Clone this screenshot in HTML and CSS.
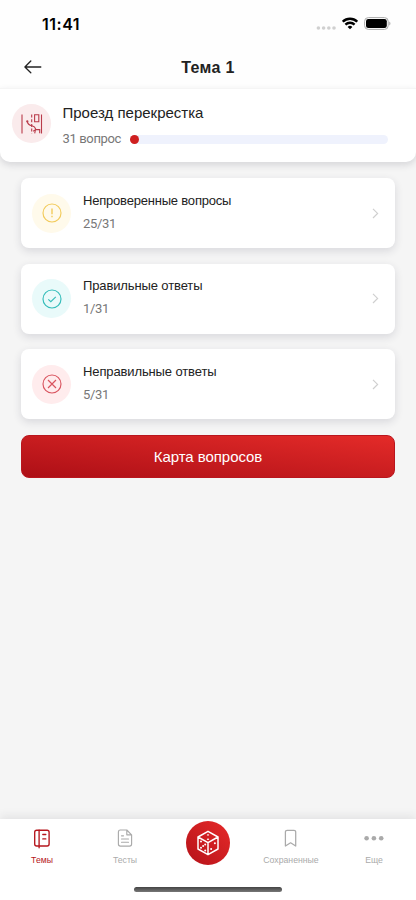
FILE: index.html
```html
<!DOCTYPE html>
<html lang="ru">
<head>
<meta charset="utf-8">
<meta name="viewport" content="width=device-width, initial-scale=1">
<title>Тема 1</title>
<link rel="stylesheet" href="styles.css">
</head>
<body>
<div class="app">
  <div class="status">
    <span class="time">11:41</span>
    <div class="status-icons">
      <svg width="20" height="4" viewBox="0 0 20 4" fill="#d0d0d0"><circle cx="2.4" cy="2" r="1.8"/><circle cx="7.6" cy="2" r="1.8"/><circle cx="12.8" cy="2" r="1.8"/><circle cx="18" cy="2" r="1.8"/></svg>
      <svg class="wifi" width="16" height="13" viewBox="0 0 16 13" fill="none" stroke="#000" stroke-width="2.3"><path d="M.8 4.7a10.3 10.3 0 0 1 14.4 0M3.4 7.6a6.6 6.6 0 0 1 9.2 0"/><path d="M8 12.2 5.6 9.9a3.5 3.5 0 0 1 4.8 0Z" fill="#000" stroke="none"/></svg>
      <svg width="27" height="13" viewBox="0 0 27 13"><rect x=".6" y=".6" width="23.6" height="11.8" rx="3.7" fill="#fff" stroke="#aaa"/><rect x="2" y="2" width="20.8" height="9" rx="2.3"/><path d="M25.4 4.5c1.3.6 1.3 3.4 0 4Z" fill="#999"/></svg>
    </div>
  </div>
  <header class="nav">
    <svg class="back" width="18" height="14" viewBox="0 0 18 14" fill="none" stroke="#222" stroke-width="1.3" stroke-linecap="round" stroke-linejoin="round"><path d="M16.8 7H.9M6.8 1 .9 7l5.9 5.7"/></svg>
    <h1>Тема 1</h1>
  </header>
  <section class="topic">
    <div class="badge topic-badge">
      <svg width="22" height="22" viewBox="0 0 22 22" fill="none" stroke="#b93b4a" stroke-width="1.1"><path d="M1 1.5v19M20.5 1.5v19"/><path d="M10.7 1.5v19" stroke-dasharray="3 1.7"/><path d="M13.6 1.8h4.2v7h-4.2ZM6.4 8.6c.3 3 2.3 3.7 4.6 4.2 2.8.6 3.1 1.3 3.7 3.2M13.7 20.3l.8-3.7h4.2v3.7M12.2 18.2l2.3-1.6"/><circle cx="6.3" cy="8.4" r=".6"/></svg>
    </div>
    <div class="topic-body">
      <h2>Проезд перекрестка</h2>
      <div class="progress-row"><span class="count">31 вопрос</span><div class="track"><div class="fill"></div></div></div>
    </div>
  </section>
  <main class="content">
    <article class="card">
      <div class="badge yellow"><svg width="20" height="20" viewBox="0 0 20 20" fill="none" stroke="#f2cb5c" stroke-width="1.15"><circle cx="10" cy="10" r="9"/><path d="M10 5.6v5.6M10 12.7v1.6" stroke-width="1.4"/></svg></div>
      <div class="card-text"><h3>Непроверенные вопросы</h3><p>25/31</p></div>
      <svg class="chevron" width="7" height="11" viewBox="0 0 7 11"><path d="M1 .8 5.6 5.4 1 10"/></svg>
    </article>
    <article class="card">
      <div class="badge teal"><svg width="20" height="20" viewBox="0 0 20 20" fill="none" stroke="#35bdba" stroke-width="1.15"><circle cx="10" cy="10" r="9"/><path d="m6.3 10.4 2.5 2.3 5-4.9"/></svg></div>
      <div class="card-text"><h3 class="snug">Правильные ответы</h3><p>1/31</p></div>
      <svg class="chevron" width="7" height="11" viewBox="0 0 7 11"><path d="M1 .8 5.6 5.4 1 10"/></svg>
    </article>
    <article class="card">
      <div class="badge pink"><svg width="20" height="20" viewBox="0 0 20 20" fill="none" stroke="#d95560" stroke-width="1.15"><circle cx="10" cy="10" r="9"/><path d="m6 6 8 8M14 6l-8 8"/></svg></div>
      <div class="card-text"><h3 class="snug">Неправильные ответы</h3><p>5/31</p></div>
      <svg class="chevron" width="7" height="11" viewBox="0 0 7 11"><path d="M1 .8 5.6 5.4 1 10"/></svg>
    </article>
    <button class="map" type="button">Карта вопросов</button>
  </main>
  <footer class="tabs">
    <nav class="tab-row">
      <a class="tab active"><svg width="20" height="22" viewBox="0 0 20 22" fill="none" stroke="currentColor" stroke-width="1.35" stroke-linecap="round"><rect x="2.7" y="2.2" width="14.4" height="15.8" rx="2"/><path d="M7.1 2.2v17.5M10.8 6.5h3M10.8 10.9h3"/></svg><span>Темы</span></a>
      <a class="tab"><svg width="20" height="22" viewBox="0 0 20 22" fill="none" stroke="currentColor" stroke-width="1.15" stroke-linecap="round" stroke-linejoin="round"><path d="M5 2h6.8l4.8 4.8v9.3a2 2 0 0 1-2 2H5.4a2 2 0 0 1-2-2V3.9a2 2 0 0 1 2-1.9M11.8 2v4.8h4.8M6.5 7.8h2M6.5 11h7M6.5 14.2h7"/></svg><span>Тесты</span></a>
      <a class="dice"><svg width="24" height="26" viewBox="0 0 24 26" fill="none" stroke="#fff" stroke-width="1.5" stroke-linejoin="round"><path d="M12 1.3 22 7v12l-10 5.7L2 19V7ZM2 7l10 5.7L22 7M12 12.7v12"/><g fill="#fff" stroke="none"><ellipse cx="12" cy="4.9" rx="1.2" ry=".7"/><ellipse cx="12" cy="9.3" rx="1.2" ry=".7"/><circle cx="5" cy="11.5" r="1"/><circle cx="9.2" cy="14.6" r="1"/><circle cx="7.1" cy="16" r="1"/><circle cx="5" cy="17.7" r="1"/><circle cx="9.2" cy="20.4" r="1"/><circle cx="18.9" cy="13.3" r="1"/><circle cx="15.1" cy="18.9" r="1"/></g></svg></a>
      <a class="tab"><svg width="20" height="22" viewBox="0 0 20 22" fill="none" stroke="currentColor" stroke-width="1.25" stroke-linejoin="round"><path d="M4.4 4a1.7 1.7 0 0 1 1.7-1.7h6.9A1.7 1.7 0 0 1 14.7 4v14l-5.1-3.2L4.4 18Z"/></svg><span>Сохраненные</span></a>
      <a class="tab"><svg width="20" height="22" viewBox="0 0 20 22" fill="currentColor"><circle cx="2.6" cy="10.2" r="2.3"/><circle cx="9.9" cy="10.2" r="2.3"/><circle cx="17.2" cy="10.2" r="2.3"/></svg><span>Еще</span></a>
    </nav>
    <div class="home"></div>
  </footer>
</div>
</body>
</html>
```
FILE: styles.css
```css
* { box-sizing: border-box; }
body { margin: 0; font-family: "Liberation Sans", Arial, sans-serif; color: #222; background: #f5f5f5; }
h1, h2, h3, p { margin: 0; font-weight: 400; }
svg { display: block; flex: none; }
.app { width: 416px; height: 900px; display: flex; flex-direction: column; overflow: hidden; }
.status { height: 46px; flex: none; background: #fefefe; display: flex; justify-content: space-between; padding: 14px 25px 0 42px; }
.time { font: 600 16px/20px Inter, sans-serif; color: #000; letter-spacing: .5px; }
.status-icons { display: flex; align-items: flex-start; padding-top: 3px; }
.status-icons svg:first-child { margin: 9px 6px 0 0; }
.wifi { margin-right: 6px; }
.nav { height: 42px; flex: none; background: #fefefe; display: grid; grid-template-columns: 24px 1fr 24px; align-items: center; padding: 0 24px; }
.nav h1 { font-size: 16px; font-weight: 700; line-height: 20px; text-align: center; letter-spacing: .3px; padding-top: 2px; }
.topic { height: 74px; flex: none; background: #fff; border-top: 1px solid #f5f5f5; border-radius: 0 0 10px 10px; box-shadow: 0 3px 7px rgba(40, 40, 60, .15); display: flex; padding: 15px 28px 0 12px; gap: 11.5px; }
.badge { width: 39px; height: 39px; border-radius: 50%; display: flex; align-items: center; justify-content: center; flex: none; }
.topic-badge { background: #faebec; }
.yellow { background: #fffaeb; }
.teal { background: #e9fafa; }
.pink { background: #ffeced; }
.topic-body { flex: 1; }
.topic h2 { font-size: 15px; line-height: 18px; }
.progress-row { display: flex; align-items: center; margin-top: 8px; }
.count { width: 67.5px; font: 400 13px/18px Roboto, sans-serif; letter-spacing: -.35px; color: #777; white-space: nowrap; }
.track { flex: 1; height: 9px; border-radius: 5px; background: #eff2fd; }
.fill { width: 9px; height: 9px; border-radius: 50%; background: #cf2020; }
.content { flex: 1; display: flex; flex-direction: column; gap: 15.7px; padding: 16px 21px 0; }
.card { height: 70px; flex: none; background: #fff; border-radius: 8px; box-shadow: 0 3px 8px rgba(40, 40, 70, .14); display: flex; align-items: center; padding: 0 16px 0 11px; }
.card-text { flex: 1; margin-left: 12px; }
.card h3 { font-size: 13px; line-height: 16px; margin-top: -1px; letter-spacing: -.2px; white-space: nowrap; }
.card h3.snug { letter-spacing: -.12px; }
.card p { font: 400 13px/18px Roboto, sans-serif; letter-spacing: -.3px; color: #777; margin-top: 6px; }
.chevron path { fill: none; stroke: #cfcfcf; stroke-width: 1.2; }
.map { height: 43px; flex: none; border: 1px solid #b9161e; border-radius: 8px; background: linear-gradient(to top right, #ad0f16, #e42b29); color: #fff; font: 400 15px/20px "Liberation Sans", Arial, sans-serif; letter-spacing: -.05px; padding: 0; }
.tabs { height: 81px; flex: none; background: #fff; box-shadow: 0 -3px 9px rgba(40, 40, 60, .09); }
.tab-row { height: 68px; display: grid; grid-template-columns: repeat(5, 83px); justify-content: center; }
.tab { display: flex; flex-direction: column; align-items: center; padding-top: 9px; color: #aaa; font-size: 8.7px; line-height: 12px; }
.tab span { margin-top: 4px; }
.tab.active { color: #b5161d; }
.dice { width: 44px; height: 44px; margin: 2px auto 0; border-radius: 50%; background: linear-gradient(to top right, #b51219, #e62a29); display: flex; align-items: center; justify-content: center; }
.home { width: 148px; height: 5px; border-radius: 3px; margin: 0 auto; background: linear-gradient(#444, #777); }
```
